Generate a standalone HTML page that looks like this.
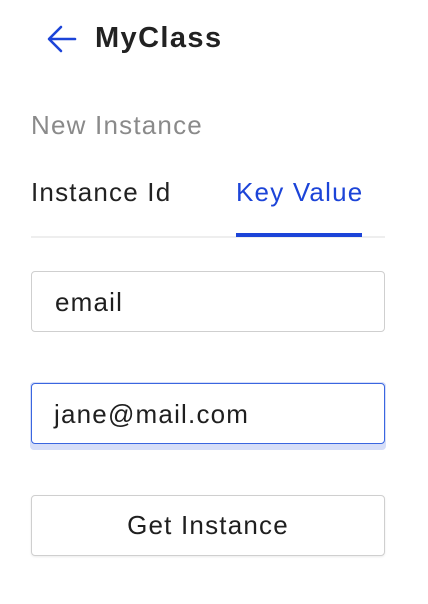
<!DOCTYPE html>
<html><head><style>
body{margin:0;width:428px;height:604px;background:#fff;font-family:"Liberation Sans",sans-serif;position:relative;overflow:hidden}
.a{position:absolute}
.t{font-size:26px;letter-spacing:1.2px}
.box{position:absolute;left:31px;width:352px;height:59px;border:1px solid #cfcfcf;border-radius:4px;color:#1f1f1f;box-sizing:content-box}
</style></head><body>
<svg class="a" style="left:46px;top:24px" width="32" height="30" viewBox="0 0 32 30"><path d="M29 15H4M15 3L3 15l12 12" fill="none" stroke="#1c44d8" stroke-width="2.6" stroke-linecap="round" stroke-linejoin="round"/></svg>
<div class="a" style="left:95px;top:22px;font-size:29px;letter-spacing:1.4px;font-weight:bold;color:#222">MyClass</div>
<div class="a t" style="left:31px;top:110px;color:#8a8a8a">New Instance</div>
<div class="a t" style="left:31px;top:177px;color:#222">Instance Id</div>
<div class="a t" style="left:236px;top:177px;color:#1c44d8">Key Value</div>
<div class="a" style="left:31px;top:236px;width:354px;height:2px;background:#eee"></div>
<div class="a" style="left:236px;top:233px;width:126px;height:4px;background:#1c44d8"></div>
<div class="box" style="top:271px"><span class="a t" style="left:23px;top:15px">email</span></div>
<div class="a" style="left:30px;top:382px;width:356px;height:68px;background:#d6def8;border-radius:4px"></div>
<div class="box" style="top:383px;border-color:#3a66e0;background:#fff"><span class="a t" style="left:22px;top:15px">jane@mail.com</span></div>
<div class="box t" style="top:495px;text-align:center;line-height:59px;box-shadow:0 1px 2px rgba(0,0,0,.08)">Get Instance</div>
</body></html>
